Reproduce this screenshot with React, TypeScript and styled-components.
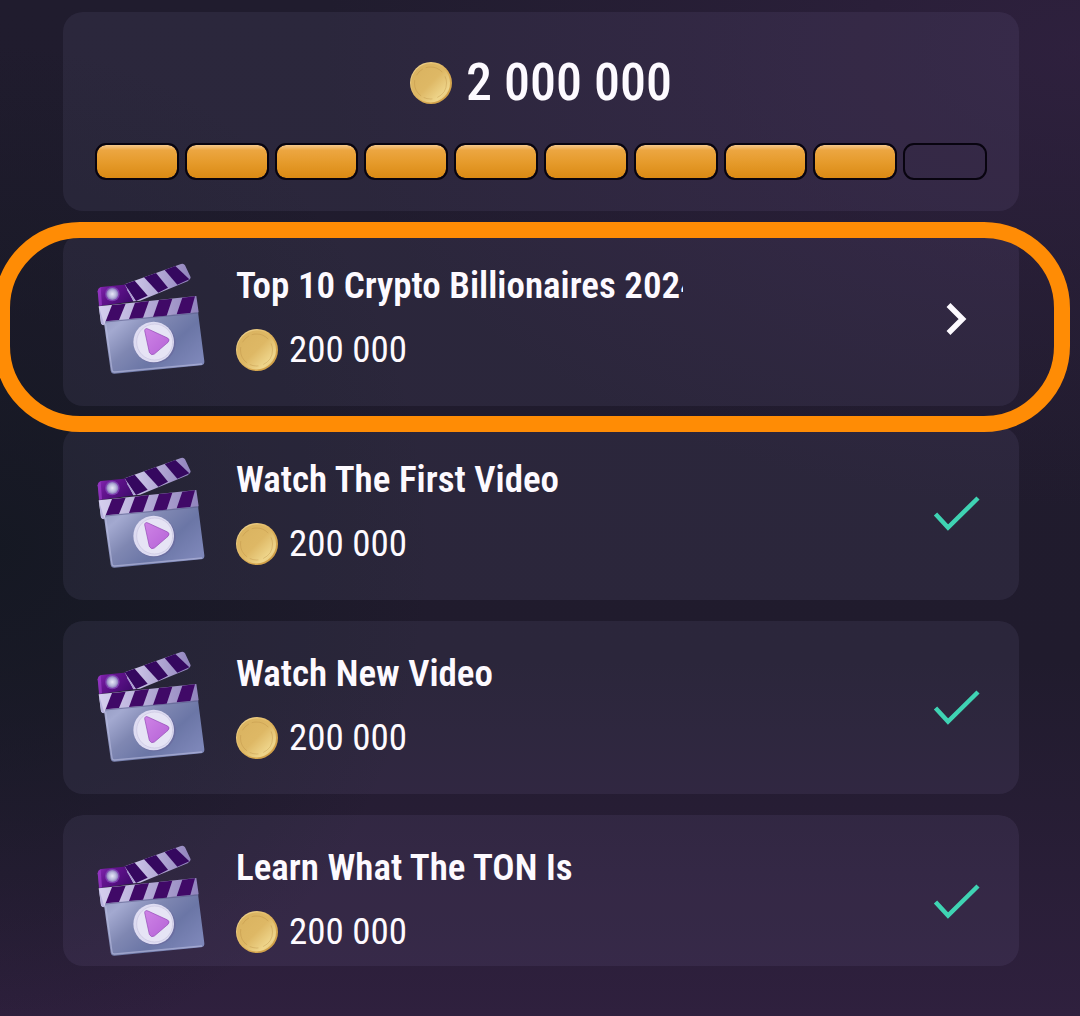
import React from "react";
import styled, { createGlobalStyle, css } from "styled-components";

const fontStack = `"Roboto Condensed", "Liberation Sans Narrow", Roboto, sans-serif`;

const GlobalStyle = createGlobalStyle`
  *, *::before, *::after { box-sizing: border-box; }
  body {
    margin: 0;
    background: #1f1b2c;
    color: #fdfaff;
    font-family: ${fontStack};
  }
`;

const Page = styled.main`
  display: flex;
  flex-direction: column;
  gap: 22px;
  min-height: 100vh;
  padding: 12px 61px 50px 63px;
  overflow: hidden;
  background:
    radial-gradient(ellipse 70% 45% at 100% 5%, rgba(52, 34, 68, 0.7), transparent 100%),
    radial-gradient(ellipse 40% 50% at 0% 54%, rgba(20, 24, 34, 0.9), transparent 100%),
    linear-gradient(180deg, #201c2e 0%, #201b2d 65%, #2f203e 100%);
`;

const surface = css`
  border-radius: 20px;
  background: rgba(200, 180, 255, 0.07);
`;

const Summary = styled.section`
  ${surface}
  display: flex;
  flex-direction: column;
  gap: 30px;
  padding: 41px 32px 31px;
`;

const Total = styled.h1`
  display: flex;
  align-items: center;
  justify-content: center;
  gap: 14px;
  margin: 0;
  font-size: 52px;
  line-height: 60px;
  font-weight: 500;
`;

const Progress = styled.div`
  display: flex;
  gap: 6px;
`;

const Segment = styled.span<{ $filled: boolean }>`
  flex: 1;
  height: 37px;
  border: 2px solid #08040f;
  border-radius: 11px;
  ${(p) =>
    p.$filled &&
    css`
      background: linear-gradient(180deg, #f5c88c 0%, #eca641 16%, #e59a2a 55%, #da8a14 100%) padding-box;
    `}
`;

const TaskList = styled.ul`
  display: flex;
  flex-direction: column;
  gap: 21px;
  margin: 0;
  padding: 0;
  list-style: none;
`;

const TaskItem = styled.li<{ $cut?: boolean }>`
  position: relative;
  border-radius: 20px;
  ${(p) =>
    p.$cut &&
    css`
      max-height: 151px;
      overflow: hidden;
    `}
`;

const TaskButton = styled.button`
  ${surface}
  display: flex;
  align-items: flex-start;
  gap: 31px;
  width: 100%;
  height: 173px;
  padding: 0 38px 0 32px;
  border: 0;
  color: inherit;
  font-family: inherit;
  text-align: left;
  cursor: pointer;
`;

const Highlight = styled.span`
  position: absolute;
  inset: -11px -51px -26px -69px;
  z-index: 1;
  border: 16px solid #ff8c05;
  border-radius: 86px;
  pointer-events: none;
`;

const Artwork = styled.svg`
  flex: none;
  width: 110px;
  height: 113px;
  margin-top: 29px;
`;

const TaskText = styled.span`
  display: flex;
  flex-direction: column;
  gap: 21px;
  flex: none;
  width: 447px;
  padding-top: 32px;
`;

const TaskTitle = styled.span`
  overflow: hidden;
  font-size: 37px;
  line-height: 42px;
  font-weight: 600;
  white-space: nowrap;
`;

const Reward = styled.span`
  display: flex;
  align-items: center;
  gap: 11px;
  font-size: 37px;
  line-height: 44px;
`;

const CoinDrawing = styled.svg`
  flex: none;
  width: 42px;
  height: 42px;
`;

const Status = styled.svg`
  flex: none;
  align-self: center;
  width: 48px;
  height: 48px;
  margin-left: auto;
  fill: none;
`;

const Gradients = styled.svg`
  position: absolute;
  width: 0;
  height: 0;
`;

function SharedGradients() {
  return (
    <Gradients aria-hidden="true">
      <defs>
        <linearGradient id="coin" x1="0" y1="0" x2="1" y2="1">
          <stop offset="0" stopColor="#d9b25f" />
          <stop offset="0.5" stopColor="#deb865" />
          <stop offset="0.8" stopColor="#efd68c" />
          <stop offset="1" stopColor="#dcb05a" />
        </linearGradient>
        <linearGradient id="rim" x1="0" y1="0" x2="1" y2="1">
          <stop offset="0" stopColor="#f3dc9c" />
          <stop offset="0.5" stopColor="#e0b45c" />
          <stop offset="1" stopColor="#c8953e" />
        </linearGradient>
        <linearGradient id="board" x1="0" y1="0" x2="1" y2="0.7">
          <stop offset="0" stopColor="#9298c0" />
          <stop offset="0.2" stopColor="#a3a9d0" />
          <stop offset="0.45" stopColor="#7f87b2" />
          <stop offset="0.7" stopColor="#6b76a6" />
          <stop offset="1" stopColor="#7d86b8" />
        </linearGradient>
        <linearGradient id="hinge" x1="0" y1="0" x2="1" y2="0.5">
          <stop offset="0" stopColor="#8a2ab8" />
          <stop offset="0.4" stopColor="#64148f" />
          <stop offset="1" stopColor="#430a70" />
        </linearGradient>
        <linearGradient id="stripe" x1="0" y1="0" x2="1" y2="0">
          <stop offset="0" stopColor="#d6d0ef" />
          <stop offset="1" stopColor="#9184bd" />
        </linearGradient>
        <linearGradient id="play" x1="0" y1="0" x2="1" y2="1">
          <stop offset="0" stopColor="#cf83e6" />
          <stop offset="1" stopColor="#b463d6" />
        </linearGradient>
        <radialGradient id="knob">
          <stop offset="0" stopColor="#e8e8f8" />
          <stop offset="0.6" stopColor="#b9b8dc" />
          <stop offset="1" stopColor="#8a78ba" />
        </radialGradient>
      </defs>
    </Gradients>
  );
}

function Coin() {
  return (
    <CoinDrawing viewBox="0 0 42 42" aria-hidden="true">
      <circle cx="21" cy="21" r="21" fill="url(#rim)" />
      <circle cx="20.5" cy="21" r="19.5" fill="url(#coin)" />
      <circle cx="20.5" cy="21" r="16" fill="none" stroke="#b98d42" strokeWidth="0.6" strokeDasharray="18 5 9 3" opacity="0.6" />
    </CoinDrawing>
  );
}

function Clapperboard() {
  return (
    <Artwork viewBox="45 36 330 339" aria-hidden="true">
      <path d="M71 212 L354 186 L373 334 Q374 344 364 346 L104 371 Q94 372 92 362 Z" fill="url(#board)" />
      <path d="M77 222 L96 360 Q97 367 105 366 L366 342" fill="none" stroke="#b9bde0" strokeWidth="4" opacity="0.6" />
      <path d="M53 124 Q54 113 64 111 L146 103 L168 153 L58 168 Z" fill="url(#hinge)" />
      <path d="M53 124 Q54 115 62 112 L66 166 L57 168 Z" fill="#9a3cc8" opacity="0.7" />
      <path d="M134 103 L303 42 Q311 39 315 46 L332 82 Q332 89 323 94 L180 152 L160 154 Z" fill="url(#stripe)" />
      <path d="M134 103 L164 92 L203 137 L168 153 Z" fill="#35085f" />
      <path d="M192 82 L228 69 L264 113 L235 128 Z" fill="#35085f" />
      <path d="M254 60 L286 48 L328 88 L292 104 Z" fill="#35085f" />
      <path d="M142 118 L163 152" stroke="#a99bd0" strokeWidth="4" />
      <circle cx="97" cy="132" r="22" fill="#7c3cae" />
      <circle cx="97" cy="132" r="18" fill="url(#knob)" />
      <path d="M56 169 L349 138 L356 187 L76 214 L73 226 Q65 226 63 220 Z" fill="url(#stripe)" />
      <path d="M57 172 L70 214 L73 226 Q65 226 63 220 Z" fill="#b7b3dd" />
      <path d="M96 165 L137 161 L117 210 L77 214 Z" fill="#400967" />
      <path d="M165 158 L207 153 L189 203 L147 207 Z" fill="#400967" />
      <path d="M237 150 L277 146 L260 197 L219 201 Z" fill="#400967" />
      <path d="M307 143 L345 139 L331 189 L290 193 Z" fill="#400967" />
      <path d="M76 216 L356 189" stroke="#5d5c8c" strokeWidth="3" opacity="0.6" />
      <ellipse cx="224" cy="279" rx="63" ry="61" fill="#6a6a9c" opacity="0.7" />
      <circle cx="221" cy="276" r="61" fill="#dedcf2" />
      <circle cx="224" cy="276" r="54" fill="#e6e4f5" stroke="#c8c4df" strokeWidth="2" />
      <path d="M194 242 Q195 233 204 237 L263 264 Q271 269 264 277 L223 312 Q213 318 208 307 Z" fill="url(#play)" stroke="#8f45b4" strokeWidth="2" />
    </Artwork>
  );
}

function Chevron() {
  return (
    <Status viewBox="0 0 48 48" aria-hidden="true">
      <path d="M15.5 9 L29.5 23 L15.5 37" stroke="#fdfaff" strokeWidth="5.5" />
    </Status>
  );
}

function Check() {
  return (
    <Status viewBox="0 0 48 48" role="img" aria-label="Completed">
      <path d="M2.5 24 L15 37.5 L45 8" stroke="#3fd3b3" strokeWidth="4.5" />
    </Status>
  );
}

const tasks = [
  { title: "Top 10 Crypto Billionaires 2024", done: false },
  { title: "Watch The First Video", done: true },
  { title: "Watch New Video", done: true },
  { title: "Learn What The TON Is", done: true },
];

const SEGMENTS = 10;
const COMPLETED = 9;

export default function App() {
  return (
    <>
      <GlobalStyle />
      <SharedGradients />
      <Page>
        <Summary>
          <Total>
            <Coin />
            2 000 000
          </Total>
          <Progress role="progressbar" aria-label="Tasks completed" aria-valuemin={0} aria-valuemax={SEGMENTS} aria-valuenow={COMPLETED}>
            {Array.from({ length: SEGMENTS }, (_, i) => (
              <Segment key={i} $filled={i < COMPLETED} />
            ))}
          </Progress>
        </Summary>
        <TaskList>
          {tasks.map((task, i) => (
            <TaskItem key={task.title} $cut={i === tasks.length - 1}>
              <TaskButton type="button">
                <Clapperboard />
                <TaskText>
                  <TaskTitle>{task.title}</TaskTitle>
                  <Reward>
                    <Coin />
                    200 000
                  </Reward>
                </TaskText>
                {task.done ? <Check /> : <Chevron />}
              </TaskButton>
              {!task.done && <Highlight />}
            </TaskItem>
          ))}
        </TaskList>
      </Page>
    </>
  );
}
